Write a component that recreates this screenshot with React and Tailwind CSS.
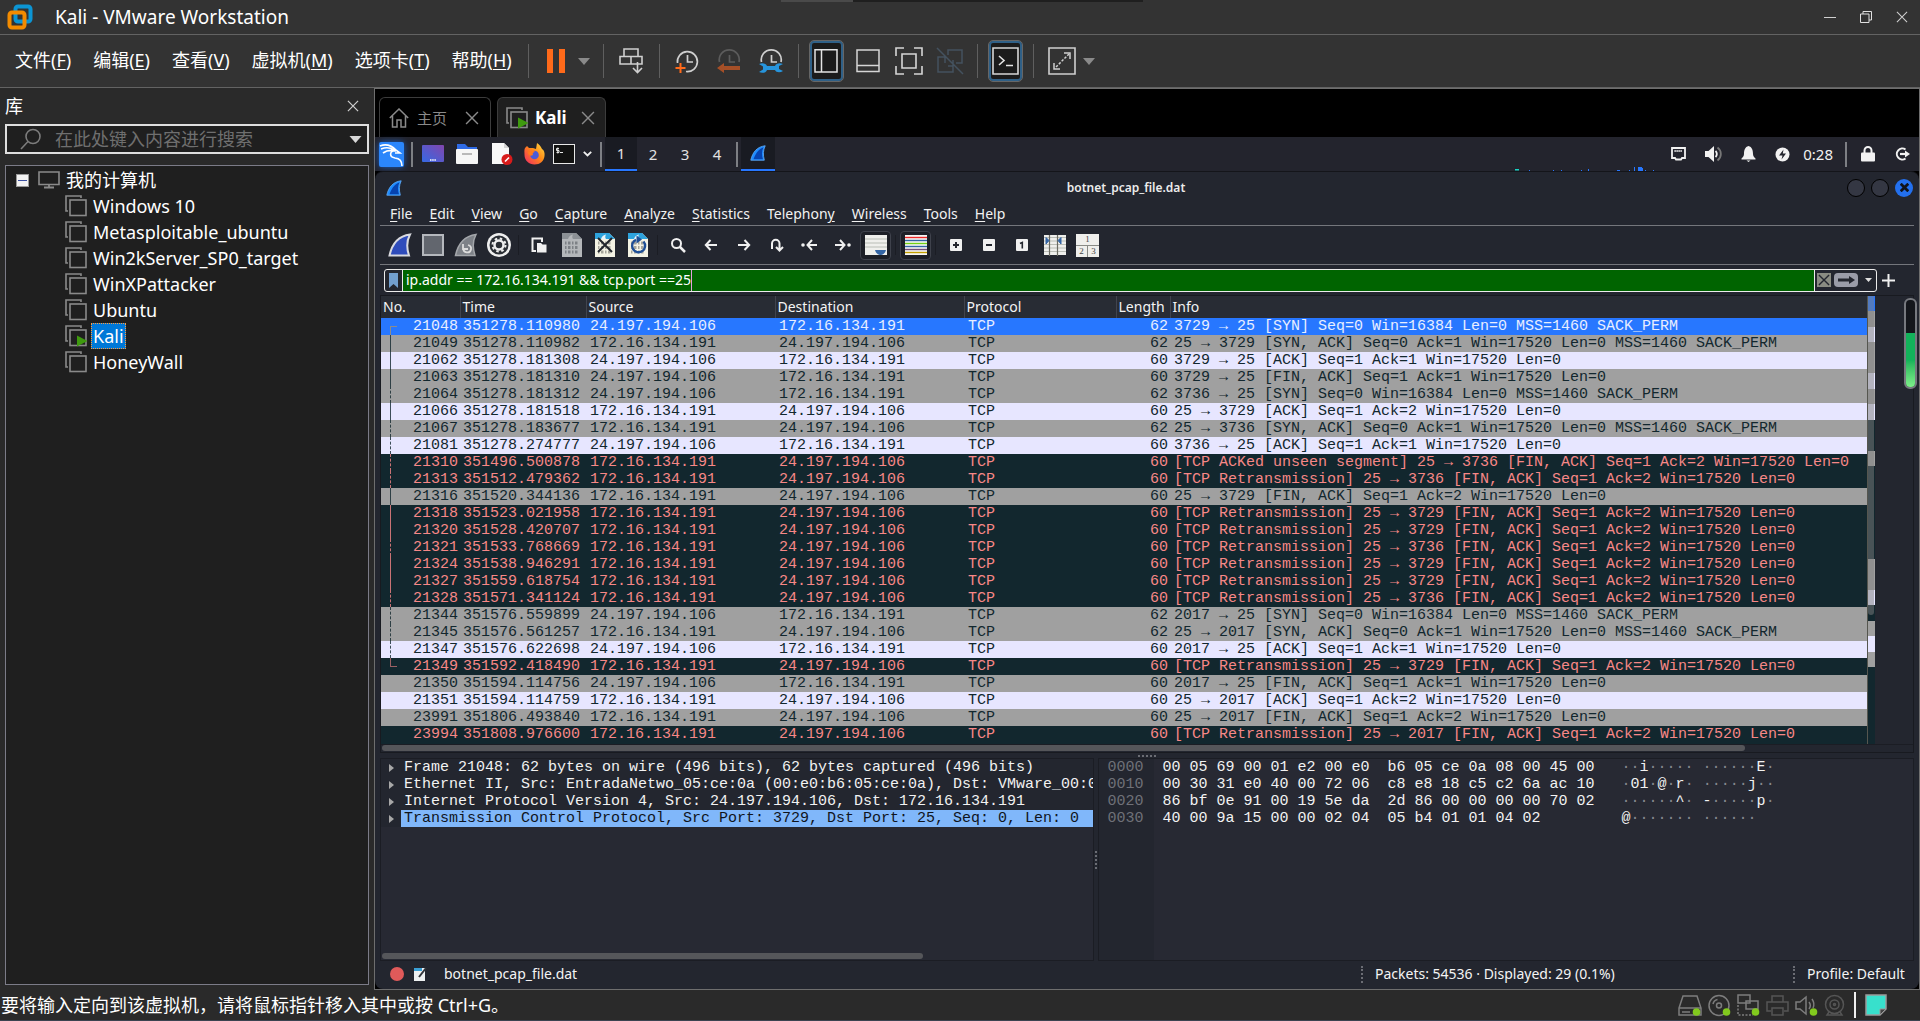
import React from "react";

const UI = "font-['Noto_Sans','Noto_Sans_CJK_SC',sans-serif]";
const MONO = "font-['Liberation_Mono',monospace]";

const MENUS = [
  ["文件", "F"],
  ["编辑", "E"],
  ["查看", "V"],
  ["虚拟机", "M"],
  ["选项卡", "T"],
  ["帮助", "H"],
];

const MACHINES = [
  "Windows 10",
  "Metasploitable_ubuntu",
  "Win2kServer_SP0_target",
  "WinXPattacker",
  "Ubuntu",
  "Kali",
  "HoneyWall",
];

const A = "24.197.194.106";
const B = "172.16.134.191";
const fin = (p, tag = true) =>
  `${tag ? "[TCP Retransmission] " : ""}25 → ${p} [FIN, ACK] Seq=1 Ack=2 Win=17520 Len=0`;

/* kind: s selected, g gray, l light, d dark; line: related-packet marker */
const PACKETS = [
  [21048, "351278.110980", A, B, 62, "3729 → 25 [SYN] Seq=0 Win=16384 Len=0 MSS=1460 SACK_PERM", "s", "start"],
  [21049, "351278.110982", B, A, 62, "25 → 3729 [SYN, ACK] Seq=0 Ack=1 Win=17520 Len=0 MSS=1460 SACK_PERM", "g", "solid"],
  [21062, "351278.181308", A, B, 60, "3729 → 25 [ACK] Seq=1 Ack=1 Win=17520 Len=0", "l", "solid"],
  [21063, "351278.181310", A, B, 60, "3729 → 25 [FIN, ACK] Seq=1 Ack=1 Win=17520 Len=0", "g", "solid"],
  [21064, "351278.181312", A, B, 62, "3736 → 25 [SYN] Seq=0 Win=16384 Len=0 MSS=1460 SACK_PERM", "g", "dash"],
  [21066, "351278.181518", B, A, 60, "25 → 3729 [ACK] Seq=1 Ack=2 Win=17520 Len=0", "l", "solid"],
  [21067, "351278.183677", B, A, 62, "25 → 3736 [SYN, ACK] Seq=0 Ack=1 Win=17520 Len=0 MSS=1460 SACK_PERM", "g", "dash"],
  [21081, "351278.274777", A, B, 60, "3736 → 25 [ACK] Seq=1 Ack=1 Win=17520 Len=0", "l", "dash"],
  [21310, "351496.500878", B, A, 60, "[TCP ACKed unseen segment] 25 → 3736 [FIN, ACK] Seq=1 Ack=2 Win=17520 Len=0", "d", "dash"],
  [21313, "351512.479362", B, A, 60, fin(3736), "d", "dash"],
  [21316, "351520.344136", B, A, 60, fin(3729, false), "g", "solid"],
  [21318, "351523.021958", B, A, 60, fin(3729), "d", "solid"],
  [21320, "351528.420707", B, A, 60, fin(3729), "d", "solid"],
  [21321, "351533.768669", B, A, 60, fin(3736), "d", "dash"],
  [21324, "351538.946291", B, A, 60, fin(3729), "d", "solid"],
  [21327, "351559.618754", B, A, 60, fin(3729), "d", "solid"],
  [21328, "351571.341124", B, A, 60, fin(3736), "d", "dash"],
  [21344, "351576.559899", A, B, 62, "2017 → 25 [SYN] Seq=0 Win=16384 Len=0 MSS=1460 SACK_PERM", "g", "dash"],
  [21345, "351576.561257", B, A, 62, "25 → 2017 [SYN, ACK] Seq=0 Ack=1 Win=17520 Len=0 MSS=1460 SACK_PERM", "g", "dash"],
  [21347, "351576.622698", A, B, 60, "2017 → 25 [ACK] Seq=1 Ack=1 Win=17520 Len=0", "l", "dash"],
  [21349, "351592.418490", B, A, 60, fin(3729), "d", "end"],
  [21350, "351594.114756", A, B, 60, "2017 → 25 [FIN, ACK] Seq=1 Ack=1 Win=17520 Len=0", "g", ""],
  [21351, "351594.114759", B, A, 60, "25 → 2017 [ACK] Seq=1 Ack=2 Win=17520 Len=0", "l", ""],
  [23991, "351806.493840", B, A, 60, "25 → 2017 [FIN, ACK] Seq=1 Ack=2 Win=17520 Len=0", "g", ""],
  [23994, "351808.976600", B, A, 60, fin(2017), "d", ""],
  [23996, "351812.251604", B, A, 60, fin(2017), "d", ""],
];

const ROW = {
  s: "bg-[#2777ff] text-[#e8eeff]",
  g: "bg-[#a0a0a0] text-[#12272e]",
  l: "bg-[#e7e6ff] text-[#12272e]",
  d: "bg-[#12272e] text-[#f78787]",
};

const MAP = { s: "bg-[#2777ff]", g: "bg-[#a0a0a0]", l: "bg-[#e7e6ff]", d: "bg-[#12272e]" };

const LINE = {
  start: "h-[9px] w-[7px] self-end border-l border-t border-[#8c8c8c]",
  end: "h-[9px] w-[7px] self-start border-l border-b border-current opacity-60",
  solid: "h-full w-[7px] border-l border-current opacity-80",
  dash: "h-full w-[7px] border-l border-dashed border-current opacity-80",
  "": "w-[7px]",
};

const DETAILS = [
  "Frame 21048: 62 bytes on wire (496 bits), 62 bytes captured (496 bits)",
  "Ethernet II, Src: EntradaNetwo_05:ce:0a (00:e0:b6:05:ce:0a), Dst: VMware_00:0",
  "Internet Protocol Version 4, Src: 24.197.194.106, Dst: 172.16.134.191",
  "Transmission Control Protocol, Src Port: 3729, Dst Port: 25, Seq: 0, Len: 0",
];

const HEX = [
  ["0000", "00 05 69 00 01 e2 00 e0  b6 05 ce 0a 08 00 45 00", "··i····· ······E·"],
  ["0010", "00 30 31 e0 40 00 72 06  c8 e8 18 c5 c2 6a ac 10", "·01·@·r· ·····j··"],
  ["0020", "86 bf 0e 91 00 19 5e da  2d 86 00 00 00 00 70 02", "······^· -·····p·"],
  ["0030", "40 00 9a 15 00 00 02 04  05 b4 01 01 04 02", "@······· ······"],
];

const WS_MENUS = [
  ["", "F", "ile"],
  ["", "E", "dit"],
  ["", "V", "iew"],
  ["", "G", "o"],
  ["", "C", "apture"],
  ["", "A", "nalyze"],
  ["", "S", "tatistics"],
  ["Telephon", "y", ""],
  ["", "W", "ireless"],
  ["", "T", "ools"],
  ["", "H", "elp"],
];

function Svg({ w = 24, h = w, vb, children, className = "" }) {
  return (
    <svg
      width={w}
      height={h}
      viewBox={vb || `0 0 ${w} ${h}`}
      fill="none"
      className={`shrink-0 ${className}`}
      aria-hidden="true"
    >
      {children}
    </svg>
  );
}

function VmLogo() {
  return (
    <Svg w={26} vb="0 0 26 26">
      <rect x="8.5" y="2.5" width="15" height="15" rx="2.5" stroke="#0c95d4" strokeWidth="4" />
      <rect x="2.5" y="8.5" width="15" height="15" rx="2.5" stroke="#f38b00" strokeWidth="4" />
      <path d="M8.5 11V15.5Q8.5 17.500 10.500 17.500H15" stroke="#0c95d4" strokeWidth="2.500" />
    </Svg>
  );
}

function Caret({ color = "#8a8a8a", w = 12 }) {
  return (
    <Svg w={w} h={7} vb="0 0 12 7">
      <path d="M0 0H12L6 7Z" fill={color} />
    </Svg>
  );
}

function Cross({ size = 13, color = "#d0d0d0", width = 1.3 }) {
  return (
    <Svg w={size} vb="0 0 13 13">
      <path d="M1 1L12 12M12 1L1 12" stroke={color} strokeWidth={width} />
    </Svg>
  );
}

function VmIcon({ running }) {
  return (
    <Svg w={23} h={22} vb="0 0 23 22">
      <path d="M16 3V1H1V16H3" stroke="#8a8a8a" strokeWidth="1.600" />
      <rect x="5" y="5" width="16" height="15.500" stroke="#8a8a8a" strokeWidth="1.600" fill="#1f1f1f" />
      {running && <path d="M12 10.500V21.500L22.500 16Z" fill="#3f9a0f" />}
    </Svg>
  );
}

function Fin({ w = 20, light = "#1d8cff", dark = "#0643b0", stroke = "#5aa4f0" }) {
  return (
    <Svg w={w} vb="0 0 20 20">
      <path d="M2 18C4 9 9 3 18 2C15.500 7 15.500 12 17 18Z" fill={light} stroke={stroke} strokeWidth="1" />
      <path d="M5 17C8 9 12 5 16 4C14 8 14 13 15.500 17Z" fill={dark} />
    </Svg>
  );
}

function ClockIcon({ kind }) {
  const c = kind === "back" ? "#5c5c5c" : "#cfcfcf";
  return (
    <Svg w={26} vb="0 0 26 26">
      {kind === "add" ? (
        <path d="M3.500 15A10 10 0 1 1 12 23.500" stroke={c} strokeWidth="1.700" />
      ) : (
        <path d="M3.500 14A10 10 0 1 1 23 14" stroke={c} strokeWidth="1.700" />
      )}
      <path d="M13.500 7V14H19" stroke={c} strokeWidth="1.700" />
      {kind === "add" && <path d="M6.500 15V25M1.500 20H11.500" stroke="#ff6a1a" strokeWidth="2" />}
      {kind === "back" && <path d="M1 20L8 15V18H24V22H8V25Z" fill="#a54f27" />}
      {kind === "wrench" && (
        <path
          d="M1 16C4 14.500 8 15 9 18H17C18 15 22 14.500 25 16L21 18V21L25 23C22 25 18 24.500 17 22H9C8 25 4 25.500 1 24L5 21.500V18.500Z"
          fill="#2795dd"
        />
      )}
    </Svg>
  );
}

function Divider() {
  return <span className="h-[34px] w-px shrink-0 bg-[#5f5f5f]" />;
}

function TopBar() {
  return (
    <header className="flex h-[35px] shrink-0 items-start border-b border-[#636363] bg-[#333333]">
      <div className="flex h-[34px] items-center gap-[22px] pl-[7px]">
        <VmLogo />
        <h1 className="whitespace-nowrap text-[19px] leading-6 text-white">Kali - VMware Workstation</h1>
      </div>
      <div className="flex h-[2px] flex-1 pl-[492px]">
        <span className="w-[72px] bg-[#4a4a4a]" />
        <span className="w-[290px] bg-[#1f1f1f]" />
      </div>
      <div className="flex h-[34px] items-center gap-6 pr-3">
        <button aria-label="最小化" className="flex w-3 justify-center">
          <Svg w={12} vb="0 0 12 12"><path d="M0 6.500H12" stroke="#d0d0d0" /></Svg>
        </button>
        <button aria-label="还原">
          <Svg w={12} vb="0 0 12 12">
            <path d="M3 3V.5H11.500V9H9M.5 3H9V11.500H.5Z" stroke="#e0e0e0" />
          </Svg>
        </button>
        <button aria-label="关闭"><Cross size={12} width={1.1} /></button>
      </div>
    </header>
  );
}

function VmToolbar() {
  return (
    <div className="flex h-[53px] shrink-0 items-center border-b border-[#636363] bg-[#333333] pl-[15px]">
      <nav className="flex gap-[22px] pb-[2px] text-[18px] leading-6 text-white">
        {MENUS.map(([t, k]) => (
          <button key={k} className="whitespace-nowrap">
            {t}(<u className="underline-offset-2">{k}</u>)
          </button>
        ))}
      </nav>
      <div className="ml-4 flex items-center">
        <Divider />
        <button aria-label="挂起" className="ml-[18px]">
          <Svg w={18} h={24} vb="0 0 18 24">
            <path d="M0 0H6V24H0ZM12 0H18V24H12Z" fill="#ff6a1a" />
          </Svg>
        </button>
        <button aria-label="电源选项" className="mx-[13px]"><Caret /></button>
        <Divider />
        <button aria-label="发送 Ctrl+Alt+Del" className="mx-[15px]">
          <Svg w={25} h={26} vb="0 0 25 26">
            <path d="M5 1H19V8.500H5ZM1 8.500H12V16H1ZM12 8.500H23V16H12Z" stroke="#cfcfcf" strokeWidth="1.600" />
            <path d="M18.500 14V24M14 20L18.500 24.500L23 20" stroke="#cfcfcf" strokeWidth="1.600" />
          </Svg>
        </button>
        <Divider />
        <div className="mx-[14px] flex gap-4">
          <button aria-label="拍摄快照"><ClockIcon kind="add" /></button>
          <button aria-label="恢复快照"><ClockIcon kind="back" /></button>
          <button aria-label="管理快照"><ClockIcon kind="wrench" /></button>
        </div>
        <Divider />
        <div className="ml-[11px] mr-[13px] flex items-center">
          <button aria-label="显示库" className="flex h-10 w-[33px] items-center justify-center rounded border-2 border-[#2f6087] bg-[#1b1b1b] outline outline-1 outline-[#666]">
            <Svg w={24} vb="0 0 24 24">
              <path d="M1 .8H23V23H1ZM7.500 1V23" stroke="#e4e4e4" strokeWidth="1.500" />
            </Svg>
          </button>
          <button aria-label="缩略图栏" className="ml-[13px]">
            <Svg w={24} vb="0 0 24 24">
              <path d="M1 1H23V22.500H1ZM1 16.500H23" stroke="#d6d6d6" strokeWidth="1.500" />
            </Svg>
          </button>
          <button aria-label="全屏" className="ml-[15px]">
            <Svg w={28} vb="0 0 28 28">
              <path d="M9 1H1V9M19 1H27V9M27 19V27H19M9 27H1V19M7 7H21V21H7Z" stroke="#d6d6d6" strokeWidth="1.600" />
            </Svg>
          </button>
          <button aria-label="Unity" className="ml-[13px]">
            <Svg w={28} vb="0 0 28 28">
              <path d="M12 8V3H26V16H20M9 10H2V25H17V19M9 10V16M17 13V19H12M1 1L27 27" stroke="#44525f" strokeWidth="1.500" />
            </Svg>
          </button>
        </div>
        <Divider />
        <button aria-label="控制台视图" className="mx-[11px] flex h-10 w-[33px] items-center justify-center rounded border-2 border-[#2f6087] bg-[#1b1b1b] outline outline-1 outline-[#666]">
          <Svg w={27} h={28} vb="0 0 27 28">
            <path d="M1 1H26V27H1Z" stroke="#d6d6d6" strokeWidth="1.600" />
            <path d="M7 9L12 13.500L7 18M14 18.500H21" stroke="#e4e4e4" strokeWidth="1.600" />
          </Svg>
        </button>
        <Divider />
        <button aria-label="拉伸" className="ml-[14px]">
          <Svg w={28} vb="0 0 28 28">
            <path d="M1 1H27V27H1Z" stroke="#cfcfcf" strokeWidth="1.600" />
            <path d="M16 6H22V12M6 16V22H12" stroke="#cfcfcf" strokeWidth="1.500" />
            <path d="M8 20L21 7" stroke="#cfcfcf" strokeWidth="1.500" strokeDasharray="2.500 1.500" />
          </Svg>
        </button>
        <button aria-label="拉伸选项" className="ml-[7px]"><Caret /></button>
      </div>
    </div>
  );
}

function Library() {
  return (
    <aside className="flex w-[374px] shrink-0 flex-col bg-[#2a2a2a] px-[5px] pb-[5px]">
      <div className="flex h-9 items-center justify-between pr-[10px]">
        <h2 className="text-[18px] leading-6 text-white">库</h2>
        <button aria-label="关闭库"><Cross size={12} /></button>
      </div>
      <label className="flex h-[30px] shrink-0 items-center border-2 border-[#dedede] bg-[#1f1f1f] pl-[13px] pr-1">
        <Svg w={22} vb="0 0 22 22">
          <circle cx="13" cy="8.500" r="7" stroke="#7c7c7c" strokeWidth="1.600" />
          <path d="M8 13.500L1 21" stroke="#7c7c7c" strokeWidth="1.600" />
        </Svg>
        <input
          aria-label="搜索"
          placeholder="在此处键入内容进行搜索"
          className="ml-[13px] min-w-0 flex-1 bg-transparent text-[18px] leading-6 outline-none placeholder:text-[#6f6f6f]"
        />
        <Caret color="#d8d8d8" w={15} />
      </label>
      <div className="mt-[11px] flex-1 border border-[#7c7c88] bg-[#1f1f1f] pt-px text-[18px] leading-[26px] text-white">
        <div className="flex items-center pl-[10px]">
          <button aria-label="折叠" className="mr-[9px] flex size-[13px] items-center justify-center border border-[#999] bg-[#f2f2f2]">
            <span className="h-px w-[9px] bg-[#3b4fa0]" />
          </button>
          <Svg w={22} h={18} vb="0 0 22 18">
            <path d="M1 1H21V13.500H1Z" stroke="#8a8a8a" strokeWidth="1.600" />
            <path d="M11 14V16M6 16.500H16" stroke="#8a8a8a" strokeWidth="1.800" />
          </Svg>
          <span className="ml-[6px]">我的计算机</span>
        </div>
        <ul>
          {MACHINES.map((m) => (
            <li key={m} className="flex items-center pl-[59px]">
              <VmIcon running={m === "Kali"} />
              <span
                className={
                  m === "Kali"
                    ? "ml-[3px] bg-[#0078d7] px-[2px] outline-1 -outline-offset-1 outline-dotted outline-[#ff9a3c]"
                    : "ml-[3px] px-[2px]"
                }
              >
                {m}
              </span>
            </li>
          ))}
        </ul>
      </div>
    </aside>
  );
}

function Tabs() {
  return (
    <div className="flex h-12 shrink-0 gap-[6px] bg-black pl-1 pt-2">
      <div className="flex w-[112px] items-center rounded-t-md border border-b-0 border-[#3c3c3c] pl-[9px]">
        <Svg w={20} vb="0 0 20 20">
          <path d="M.8 10L10 1L19.200 10M3.500 8V19H8V12H12V19H16.500V8" stroke="#8a8a8a" strokeWidth="1.500" />
        </Svg>
        <button className="ml-2 text-[15px] leading-6 text-[#8a8a8a]">主页</button>
        <button aria-label="关闭主页" className="ml-[18px]"><Cross size={14} color="#8a8a8a" /></button>
      </div>
      <div className="flex w-[109px] items-center rounded-t-md border border-b-0 border-[#3c3c3c] bg-[#1f1f1f] pl-2">
        <VmIcon running />
        <button className="ml-[6px] text-[17px] font-bold leading-6 text-white">Kali</button>
        <button aria-label="关闭 Kali" className="ml-[14px]"><Cross size={14} color="#8a8a8a" /></button>
      </div>
    </div>
  );
}

function PanelSep() {
  return <span className="h-[25px] w-[2px] shrink-0 bg-[#7d7f84]" />;
}

function KaliPanel() {
  return (
    <div className="flex h-[34px] shrink-0 items-center bg-[#23242d] pl-1">
      <button aria-label="Applications" className="mr-[7px] rounded-sm shadow-[0_0_6px_#1d5fc0]">
        <Svg w={25} vb="1 0 25 25">
          <rect x="1" width="25" height="25" rx="2" fill="#2b86fb" />
          <path d="M2 4C8 1.500 14 4 18 8M3 7C8 5 13 6 16 8M5 11C9 8 14 8 18 9M18 8C11 9 11 15 17 16C22 16.500 24 19 24 24M14 8L18 8L22 11L17 11" stroke="#fff" strokeWidth="1.600" />
        </Svg>
      </button>
      <PanelSep />
      <button aria-label="Show desktop" className="ml-[9px]">
        <Svg w={22} h={18} vb="0 0 22 18">
          <defs>
            <linearGradient id="desk" x1="0" y1="1" x2="1" y2="0">
              <stop offset="0" stopColor="#3569e4" />
              <stop offset="1" stopColor="#8246ad" />
            </linearGradient>
          </defs>
          <rect width="22" height="17" rx="1" fill="url(#desk)" />
          <path d="M8 15H14" stroke="#fff" strokeWidth="1.500" strokeDasharray="1.500 .7" />
        </Svg>
      </button>
      <button aria-label="Files" className="ml-3">
        <Svg w={22} h={20} vb="0 0 22 20">
          <path d="M1 0H9L12 3H21V8H1Z" fill="#2f6be6" />
          <rect y="5" width="22" height="15" rx="1" fill="#f6f6f6" />
          <path d="M6 10H16" stroke="#b9b9b9" strokeWidth="2" />
        </Svg>
      </button>
      <button aria-label="Text editor" className="ml-[14px]">
        <Svg w={21} h={22} vb="0 0 21 22">
          <path d="M0 0H12L17 5V21H0Z" fill="#f8f8f8" />
          <path d="M12 0V5H17" fill="#d5d5d5" />
          <circle cx="15" cy="16.500" r="5.500" fill="#d81b1b" />
          <path d="M13 18.500L17 14.500" stroke="#fff" strokeWidth="1.600" />
        </Svg>
      </button>
      <button aria-label="Firefox" className="ml-[11px]">
        <Svg w={21} h={22} vb="0 0 21 22">
          <defs>
            <linearGradient id="ffx" x1="1" y1="0" x2="0" y2="1">
              <stop offset="0" stopColor="#ffe24a" />
              <stop offset=".45" stopColor="#ff8a16" />
              <stop offset="1" stopColor="#f0246a" />
            </linearGradient>
          </defs>
          <path d="M1 5L3 3L5 5L9 5L12 6L13 0C16 2 17 4 18 6C20 7 21 10 20.500 13C20 18 16 21.500 10.500 21.500C5 21.500 .5 17.500 .5 12C.5 9 0 7 1 5Z" fill="url(#ffx)" />
          <circle cx="10.500" cy="12" r="4.300" fill="#4a5bd8" />
          <path d="M4 9C7 7 10 8 11 9C9 9 8 11 9 12C5 14 4 11 4 9Z" fill="#ff7a1c" />
        </Svg>
      </button>
      <button aria-label="Terminal" className="ml-2">
        <Svg w={22} h={20} vb="0 0 22 20">
          <rect x=".5" y=".5" width="21" height="19" fill="#121212" stroke="#e8e8e8" />
          <path d="M6 4.500H3.500V6.500H6V8.500H3.500M4.800 3.500V9.500M7 8.500H10" stroke="#e8e8e8" strokeWidth="1" />
        </Svg>
      </button>
      <button aria-label="More terminals" className="ml-2">
        <Svg w={9} h={6} vb="0 0 9 6"><path d="M.8 .8L4.500 4.500L8.200 .8" stroke="#f0f0f0" strokeWidth="1.800" /></Svg>
      </button>
      <span className="w-[8px]" />
      <PanelSep />
      <div className="ml-[3px] flex h-full text-[15px] leading-8 text-[#e2e2e2]">
        {["1", "2", "3", "4"].map((n) => (
          <button key={n} className={n === "1" ? "w-8 border-b-2 border-[#2777ff] bg-[#191b22]" : "w-8"}>
            {n}
          </button>
        ))}
      </div>
      <span className="w-[3px]" />
      <PanelSep />
      <button aria-label="Wireshark window" className="ml-[3px] flex h-full w-[34px] items-center justify-center border-b-2 border-[#2777ff] bg-[#191b22]">
        <Fin w={18} />
      </button>
      <div className="ml-auto flex h-full items-center pr-[9px] text-[#f2f2f2]">
        <svg width="144" height="6" viewBox="0 0 144 6" className="mr-3 self-end" aria-hidden="true">
          <path d="M0 4H4V5.500H0Z" fill="#19d3c5" />
          <path d="M14 5h1v1h-1zM38 5h1v1h-1zM46 5h1v1h-1zM66 5h1v1h-1zM73 4h1v2h-1zM102 5h3v1h-3zM114 5h1v1h-1zM119 2h1v4h-1zM123 2h4v1h1v3h-5zM130 5h1v1h-1zM138 5h1v1h-1z" fill="#2777ff" />
        </svg>
        <div className="flex items-center gap-[19px]">
          <Svg w={15} h={14} vb="0 0 15 14">
            <path d="M1 1H14V11H11L10 12.500H5L4 11H1Z" stroke="#f2f2f2" strokeWidth="1.800" />
            <path d="M3.500 4H11.500" stroke="#f2f2f2" strokeWidth="2" strokeDasharray="1.200 .8" />
          </Svg>
          <Svg w={17} h={16} vb="0 0 17 16">
            <path d="M0 5H3.500L9 0V16L3.500 11H0Z" fill="#f2f2f2" />
            <path d="M10.500 5A4 4 0 0 1 10.500 11" stroke="#f2f2f2" strokeWidth="1.800" />
            <path d="M12.500 1.500A8 8 0 0 1 12.500 14.500" stroke="#777" strokeWidth="1.800" />
          </Svg>
          <Svg w={15} h={16} vb="0 0 15 16">
            <path d="M7.500 0C11 1 12 4 12 8C12 10 13 11 14.500 12.500V13.500H.5V12.500C2 11 3 10 3 8C3 4 4 1 7.500 0ZM5.500 14.500H9.500L7.500 16Z" fill="#f2f2f2" />
          </Svg>
          <Svg w={15} vb="0 0 15 15">
            <circle cx="7.500" cy="7.500" r="7" fill="#f2f2f2" />
            <path d="M8.500 2.500L4 8.500H7.500L6.500 12.500L11 6.500H7.800Z" fill="#23242d" />
          </Svg>
        </div>
        <time className="ml-[13px] mr-3 text-[15px] leading-6">0:28</time>
        <PanelSep />
        <button aria-label="Lock" className="ml-[14px]">
          <Svg w={14} h={16} vb="0 0 14 16">
            <path d="M3.500 8V4.500A3.500 3.500 0 0 1 10.500 4.500V8" stroke="#f2f2f2" strokeWidth="2" />
            <rect y="6.500" width="14" height="9" rx="1" fill="#f2f2f2" />
          </Svg>
        </button>
        <button aria-label="Log out" className="ml-[20px]">
          <Svg w={15} h={14} vb="0 0 15 14">
            <path d="M10.500 2.500A5.500 5.500 0 1 0 10.500 11.500" stroke="#f2f2f2" strokeWidth="2" />
            <path d="M5 7H12" stroke="#f2f2f2" strokeWidth="2.200" />
            <path d="M10 3.500L15 7L10 10.500Z" fill="#f2f2f2" />
          </Svg>
        </button>
      </div>
    </div>
  );
}

function Sheet({ kind }) {
  const gray = kind === "save";
  return (
    <Svg w={20} h={24} vb="0 0 20 24">
      <path d="M0 0H14L20 6V24H0Z" fill={gray ? "#b4b7ba" : "#f4f3e4"} />
      <path d="M0 0H14L20 6H0Z" fill={gray ? "#8c9196" : "#2ea3dd"} />
      <path d="M6 6C7 3 9 2 11 1.500C10 3 10 5 11 6Z" fill={gray ? "#b4b7ba" : "#e8f4fa"} />
      <path d="M3 10H17M3 14.500H17M3 19H17" stroke={gray ? "#7d8186" : "#a5a59b"} strokeWidth="3" strokeDasharray="1.500 1.500 2.500 1.500" />
      {kind === "close" && <path d="M3 5L17 19M17 5L3 19" stroke="#22262c" strokeWidth="2" />}
      {kind === "reload" && (
        <>
          <path d="M15.500 8.500A6.500 6.500 0 1 1 8 6.800" stroke="#1f4f96" strokeWidth="2.400" />
          <path d="M8.500 2.500L14 6.500L8.500 10.500Z" fill="#1f4f96" />
        </>
      )}
    </Svg>
  );
}

const stroke = { stroke: "#f0f0f0", strokeWidth: 2 };
const TOOLS = [
  ["Start capture", <Svg w={24} vb="0 0 24 24" key="a"><path d="M1.500 22.500C4 11 10 3 22 1.500C18.500 8 18.500 15 21 22.500Z" fill="#2f4cbb" stroke="#d9dadf" strokeWidth="2" /></Svg>],
  ["Stop capture", <Svg w={22} vb="0 0 22 22" key="b"><rect x="1" y="1" width="20" height="20" fill="#62666e" stroke="#b5b8bd" strokeWidth="2" /></Svg>],
  ["Restart capture", <Svg w={24} vb="0 0 24 24" key="c"><path d="M1.500 22.500C4 11 10 3 22 1.500C18.500 8 18.500 15 21 22.500Z" fill="#7d8187" stroke="#a3a6aa" strokeWidth="1.500" /><path d="M9 11V16H14M9.500 15.500C9 20 16 21 17 16.500C17.500 14 16 12.500 14 12" stroke="#dcdcdc" strokeWidth="1.800" /></Svg>],
  ["Capture options", <Svg w={24} vb="0 0 24 24" key="d"><circle cx="12" cy="12" r="12" fill="#efefef" /><circle cx="12" cy="12" r="9.500" fill="#2b2f35" /><circle cx="12" cy="12" r="4.500" stroke="#efefef" strokeWidth="2.500" /><circle cx="12" cy="12" r="6.500" stroke="#efefef" strokeWidth="2" strokeDasharray="2.500 2.600" /></Svg>],
  null,
  ["Open", <Svg w={16} vb="0 0 16 16" key="e"><path d="M5 14H1.500V1.500H11V5" {...stroke} /><path d="M6 6H10L11.500 7.500H15.500V15.500H6Z" fill="#f0f0f0" /></Svg>],
  ["Save", <Sheet kind="save" key="f" />],
  ["Close file", <Sheet kind="close" key="g" />],
  ["Reload", <Sheet kind="reload" key="h" />],
  null,
  ["Find", <Svg w={16} vb="0 0 16 16" key="i"><circle cx="6.500" cy="6.500" r="4.500" {...stroke} /><path d="M9.500 9.500L15 15" stroke="#f0f0f0" strokeWidth="2.500" /></Svg>],
  ["Back", <Svg w={14} vb="0 0 14 14" key="j"><path d="M13 7H2M6.500 2L1.800 7L6.500 12" {...stroke} /></Svg>],
  ["Forward", <Svg w={14} vb="0 0 14 14" key="k"><path d="M1 7H12M7.500 2L12.200 7L7.500 12" {...stroke} /></Svg>],
  ["Go to packet", <Svg w={14} vb="0 0 14 14" key="l"><path d="M2 11V5.500A3.500 3.500 0 0 1 9.500 5.500V12M6 9L9.500 12.500L13 9" {...stroke} /></Svg>],
  ["First packet", <Svg w={17} h={14} vb="0 0 17 14" key="m"><path d="M16 7H7M11 2L6.500 7L11 12" {...stroke} /><circle cx="2" cy="7" r="1.800" fill="#f0f0f0" /></Svg>],
  ["Last packet", <Svg w={17} h={14} vb="0 0 17 14" key="n"><path d="M1 7H10M6 2L10.500 7L6 12" {...stroke} /><circle cx="15" cy="7" r="1.800" fill="#f0f0f0" /></Svg>],
  ["Auto scroll", <Svg w={22} h={20} vb="0 0 22 20" key="o"><rect width="22" height="20" fill="#efefec" /><path d="M0 4H22M0 8H22M0 12H22" stroke="#babdb6" strokeWidth="1.200" /><path d="M10 15H21C20 19 17 20 15.500 20C14 20 11 19 10 15Z" fill="#3465a4" /></Svg>, true],
  null,
  ["Colorize", <Svg w={22} h={20} vb="0 0 22 20" key="p"><rect width="22" height="20" fill="#f6f6f4" /><path d="M0 2.500H22" stroke="#ef2929" strokeWidth="1.400" /><path d="M0 5.500H22" stroke="#3465a4" strokeWidth="1.400" /><path d="M0 8.500H22" stroke="#73d216" strokeWidth="1.400" /><path d="M0 11.500H22" stroke="#3465a4" strokeWidth="1.400" /><path d="M0 14.500H22" stroke="#75507b" strokeWidth="1.400" /><path d="M0 17.500H22" stroke="#c4a000" strokeWidth="1.400" /></Svg>, true],
  null,
  ["Zoom in", <Svg w={12} vb="0 0 12 12" key="q"><rect width="12" height="12" rx="1" fill="#f0f0f0" /><path d="M6 3V9M3 6H9" stroke="#22252d" strokeWidth="2" /></Svg>],
  ["Zoom out", <Svg w={12} vb="0 0 12 12" key="r"><rect width="12" height="12" rx="1" fill="#f0f0f0" /><path d="M3 6H9" stroke="#22252d" strokeWidth="2" /></Svg>],
  ["Normal size", <Svg w={12} vb="0 0 12 12" key="s"><rect width="12" height="12" rx="1" fill="#f0f0f0" /><path d="M4 4.500L6.300 3.500V9.500" stroke="#22252d" strokeWidth="1.600" /></Svg>],
  ["Resize columns", <Svg w={22} h={21} vb="0 0 22 21" key="t"><rect width="22" height="20" fill="#efefec" /><path d="M0 2.500H22M0 6H22M0 9.500H22M0 13H22M0 16.500H22" stroke="#babdb6" strokeWidth="1" /><path d="M5.500 0V21M13.500 0V21" stroke="#6b6b62" strokeWidth="1.200" /><path d="M2 2.500L5 5.500L2 9ZM17 2.500L14 5.500L17 9Z" fill="#3465a4" stroke="#3465a4" /></Svg>],
  ["Layout", (
    <span key="u" className="grid grid-cols-2 gap-px bg-[#888a85] text-center font-['Liberation_Serif',serif] text-[9px] leading-[11px] text-[#444]">
      <span className="col-span-2 w-[23px] bg-[#efefec]">1</span>
      <span className="bg-[#efefec]">2</span>
      <span className="bg-[#efefec]">3</span>
    </span>
  )],
];

function WsToolbar() {
  return (
    <div className="flex h-[38px] shrink-0 items-center pl-[3px]">
      {TOOLS.map((t, i) =>
        t ? (
          <span key={i} className="flex w-[33px] justify-center">
            <button
              aria-label={t[0]}
              className={
                t[2]
                  ? "flex h-[29px] w-[31px] items-center justify-center rounded-sm border border-[#3f424c] bg-[#1d1f27]"
                  : "flex h-[29px] w-[31px] items-center justify-center"
              }
            >
              {t[1]}
            </button>
          </span>
        ) : (
          <span key={i} className="flex w-[7px] justify-center">
            <span className="h-5 w-px bg-[#1b1d24]" />
          </span>
        )
      )}
    </div>
  );
}

function Filter() {
  return (
    <div className="flex h-[30px] shrink-0 items-center pl-1 pr-[19px]">
      <div className="flex h-[23px] flex-1 items-stretch overflow-hidden rounded-[3px] border border-[#ececec]">
        <button aria-label="Bookmarks" className="flex w-[18px] items-center justify-center border-r border-[#ececec]">
          <Svg w={9} h={15} vb="0 0 9 15"><path d="M0 0H9V15L4.500 11L0 15Z" fill="#729fcf" /></Svg>
        </button>
        <label className="flex flex-1 bg-[#006400] pl-[3px]">
          <input
            aria-label="Display filter"
            defaultValue="ip.addr == 172.16.134.191 && tcp.port ==25"
            className="field-sizing-content border-r border-[#e6a0e0] bg-transparent text-[14px] leading-5 text-white outline-none"
          />
        </label>
        <div className="flex items-center border-l border-[#ececec] pl-[2px]">
          <button aria-label="Clear filter" className="flex h-[14px] w-[14px] items-center justify-center bg-[#8a8c82]">
            <Cross size={12} color="#23262f" width={1.5} />
          </button>
          <button aria-label="Apply filter" className="ml-[3px] flex h-[14px] w-6 items-center justify-center rounded-sm bg-[#9a9ca8]">
            <Svg w={17} h={8} vb="0 0 17 8"><path d="M0 2.500H11V0L17 4L11 8V5.500H0Z" fill="#23262f" /></Svg>
          </button>
          <button aria-label="Recent filters" className="ml-[7px] mr-1">
            <Svg w={7} h={4} vb="0 0 7 4"><path d="M0 0H7L3.500 4Z" fill="#e0e0e0" /></Svg>
          </button>
        </div>
      </div>
      <button aria-label="Add filter button" className="ml-[5px]">
        <Svg w={13} vb="0 0 13 13"><path d="M6.500 0V13M0 6.500H13" stroke="#f0f0f0" strokeWidth="2" /></Svg>
      </button>
    </div>
  );
}

function PacketList() {
  const head = "h-[22px] overflow-hidden border-r border-[#41444e] p-0 pl-[2px] text-left align-middle font-normal";
  return (
    <div className="flex h-[458px] shrink-0 flex-col border border-[#181a20] bg-[#23262f]">
      <div className="flex min-h-0 flex-1">
        <div className="min-w-0 flex-1 overflow-hidden border-r border-[#55564f] bg-[#12272e]">
          <table className="w-full table-fixed border-collapse">
            <colgroup>
              <col className="w-[79px]" />
              <col className="w-[126px]" />
              <col className="w-[189px]" />
              <col className="w-[189px]" />
              <col className="w-[152px]" />
              <col className="w-[54px]" />
              <col />
            </colgroup>
            <thead className="bg-[#282c34] text-[14px] leading-5 text-[#f4f4f4]">
              <tr>
                {["No.", "Time", "Source", "Destination", "Protocol", "Length"].map((h) => (
                  <th key={h} className={head}>{h}</th>
                ))}
                <th className="h-[22px] p-0 pl-[2px] text-left align-middle font-normal">Info</th>
              </tr>
            </thead>
            <tbody className={`${MONO} text-[15px] leading-[17px]`}>
              {PACKETS.map((p) => (
                <tr key={p[0]} className={`h-[17px] whitespace-pre ${ROW[p[6]]}`}>
                  <td className="p-0">
                    <div className="flex h-[17px] items-center justify-between pl-[9px] pr-[2px]">
                      <span className={LINE[p[7]]} />
                      {p[0]}
                    </div>
                  </td>
                  <td className="p-0 pl-[3px]">{p[1]}</td>
                  <td className="p-0 pl-1">{p[2]}</td>
                  <td className="p-0 pl-1">{p[3]}</td>
                  <td className="p-0 pl-1">TCP</td>
                  <td className="p-0 pr-[2px] text-right">{p[4]}</td>
                  <td className="overflow-hidden p-0 pl-1">{p[5]}</td>
                </tr>
              ))}
            </tbody>
          </table>
        </div>
        <div className="relative flex w-[7px] flex-col">
          {PACKETS.map((p) => (
            <span key={p[0]} className={`flex-1 ${MAP[p[6]]}`} />
          ))}
          <span className="h-[46px] bg-[#12272e]" />
          <span className="absolute left-0 top-0 h-[319px] w-[6px] rounded-b bg-[#808080]/50" />
        </div>
        <div className="w-[38px]" />
      </div>
      <div className="h-2 shrink-0 border-t border-[#1b1d24] pl-px">
        <div className="h-[6px] w-[89%] rounded-full bg-[#55565a]" />
      </div>
    </div>
  );
}

function Details() {
  return (
    <div className="flex min-w-0 flex-[712] flex-col border border-[#1b1d24] bg-[#272933]">
      <ul className={`${MONO} flex-1 overflow-hidden text-[15px] leading-[17px] text-[#f2f2f2]`}>
        {DETAILS.map((d, i) => (
          <li key={d} className="flex">
            <button aria-label="Expand" className="flex w-5 shrink-0 items-center bg-[#23262f] pl-2">
              <Svg w={5} h={8} vb="0 0 5 8"><path d="M0 0L5 4L0 8Z" fill="#a8a8a8" /></Svg>
            </button>
            <span className={`min-w-0 flex-1 overflow-hidden whitespace-pre pl-[3px] ${i === 3 ? "bg-[#80b7fa] text-[#10141c]" : "bg-[#23262f]"}`}>
              {d}
            </span>
          </li>
        ))}
      </ul>
      <div className="m-px h-[6px] w-[76%] shrink-0 rounded-full bg-[#55565a]" />
    </div>
  );
}

function HexPane() {
  return (
    <div className={`${MONO} flex min-w-0 flex-[815] border border-[#1b1d24] bg-[#272933] text-[15px] leading-[17px]`}>
      <div className="w-[55px] shrink-0 bg-[#23262f] pl-[9px] text-[#6f7178]">
        {HEX.map((h) => (
          <div key={h[0]}>{h[0]}</div>
        ))}
      </div>
      <div className="w-[459px] shrink-0 whitespace-pre pl-[9px] text-[#f2f2f2] box-content">
        {HEX.map((h) => (
          <div key={h[0]}>{h[1]}</div>
        ))}
      </div>
      <div className="whitespace-pre text-[#f2f2f2]">
        {HEX.map((h) => (
          <div key={h[0]}>
            {h[2].split(/(·+)/).map((s, i) => (
              <span key={i} className={s.startsWith("·") ? "text-[#85878e]" : ""}>{s}</span>
            ))}
          </div>
        ))}
      </div>
    </div>
  );
}

function WsStatus() {
  const sep = "h-[17px] w-0 border-l-2 border-dotted border-[#6b6d74]";
  return (
    <footer className="flex h-7 shrink-0 items-center pb-[2px] pl-[10px] pr-[6px] text-[14px] leading-5 text-[#f4f4f4]">
      <button aria-label="Expert information" className="mr-[10px] size-[14px] rounded-full bg-[#e05a5a]" />
      <button aria-label="Capture comment">
        <Svg w={13} h={14} vb="0 0 13 14">
          <rect y="1" width="11" height="13" fill="#eef1f2" />
          <path d="M0 1H8V4H0Z" fill="#3aa0d6" />
          <path d="M12 1L5 10" stroke="#30343a" strokeWidth="2" />
        </Svg>
      </button>
      <span className="ml-[17px] flex-1 whitespace-nowrap">botnet_pcap_file.dat</span>
      <span className={sep} />
      <span className="ml-[12px] w-[418px] whitespace-nowrap">Packets: 54536 · Displayed: 29 (0.1%)</span>
      <span className={sep} />
      <span className="ml-[12px] w-[101px] whitespace-nowrap">Profile: Default</span>
    </footer>
  );
}

function Wireshark() {
  return (
    <section className="relative flex min-h-0 flex-1 flex-col rounded-lg border-t border-[#14151a] bg-[#23262f] px-[5px]">
      <div className="grid h-[31px] shrink-0 grid-cols-[1fr_auto_1fr] items-center pl-[5px] pr-px">
        <Fin w={18} />
        <h2 className="pr-[46px] text-[12px] font-semibold leading-4 text-[#ececec]">botnet_pcap_file.dat</h2>
        <div className="flex justify-end gap-[6px]">
          <button aria-label="Minimize" className="size-[18px] rounded-full border border-black bg-[#343743]" />
          <button aria-label="Maximize" className="size-[18px] rounded-full border border-black bg-[#343743]" />
          <button aria-label="Close" className="flex size-[18px] items-center justify-center rounded-full bg-[#2370ee]">
            <Cross size={9} color="#10131a" width={4} />
          </button>
        </div>
      </div>
      <nav className="flex h-[23px] shrink-0 items-center gap-[17px] border-b border-[#74767c] pl-[10px] text-[14px] leading-5 text-[#f2f2f2]">
        {WS_MENUS.map(([a, k, b]) => (
          <button key={a + k + b}>
            {a}<u className="underline-offset-2">{k}</u>{b}
          </button>
        ))}
      </nav>
      <WsToolbar />
      <div className="h-px shrink-0 bg-[#74767c]" />
      <Filter />
      <PacketList />
      <div className="flex h-[5px] shrink-0 items-center justify-center">
        <span className="w-[18px] border-t-2 border-dotted border-[#6b6d74]" />
      </div>
      <div className="flex min-h-0 flex-1">
        <Details />
        <div className="flex w-1 shrink-0 items-center justify-center">
          <span className="h-[18px] border-l-2 border-dotted border-[#6b6d74]" />
        </div>
        <HexPane />
      </div>
      <WsStatus />
      <div className="absolute right-[2px] top-[126px] flex h-[91px] w-[13px] flex-col justify-end overflow-hidden rounded-md border-2 border-[#77797f] bg-[#14161b]">
        <div className="h-[62%] bg-gradient-to-b from-[#12b25a] from-50% to-[#7cf08a]" />
      </div>
    </section>
  );
}

function Dot() {
  return <circle cx="18.500" cy="18" r="3.800" fill="#82c91e" />;
}

function VmStatus() {
  const s = { stroke: "#7d7d7d", strokeWidth: 1.5 };
  const t = { stroke: "#555", strokeWidth: 1.5 };
  return (
    <footer className="flex h-[31px] shrink-0 items-center border-b border-[#3b4350] bg-[#2a2a2a] pr-[33px]">
      <p className="pl-px text-[18px] leading-6 text-white">要将输入定向到该虚拟机，请将鼠标指针移入其中或按 Ctrl+G。</p>
      <div className="ml-auto flex items-center gap-[6px]">
        <Svg w={24} h={23} vb="0 0 24 23"><path d="M1 14L5 2H19L23 14V21H1ZM1 14H23M4 18H12" {...s} /><Dot /></Svg>
        <Svg w={23} vb="0 0 23 23"><circle cx="11" cy="11.500" r="10" {...s} /><circle cx="11" cy="11.500" r="2.500" {...s} /><path d="M5 10C5.500 7.500 7 6 9.500 5.500" {...s} /><Dot /></Svg>
        <Svg w={23} vb="0 0 23 23"><path d="M1 1H13V9H1ZM9 7H21V15H9Z" fill="#2a2a2a" {...s} /><path d="M1 11V21H16" {...s} strokeDasharray="2 1.500" /><Dot /></Svg>
        <Svg w={23} vb="0 0 23 23"><path d="M6 8V2H17V8M5 17H1V8H22V17H18M6 14H17V21H6Z" {...t} /></Svg>
        <Svg w={23} vb="0 0 23 23"><path d="M1 8H5L11 3V20L5 15H1ZM14 8C15.500 10 15.500 13 14 15M17 5C19 8 19 12 18 14" {...s} /><Dot /></Svg>
        <Svg w={21} h={23} vb="0 0 21 23"><circle cx="10.500" cy="10.500" r="9" {...t} /><circle cx="10.500" cy="10.500" r="4.500" {...t} /><circle cx="10.500" cy="10.500" r="1" {...t} /><path d="M5 18L3 21H18L16 18" {...t} /></Svg>
      </div>
      <span className="ml-[9px] mr-[9px] h-[26px] w-[2px] bg-[#f0f0f0]" />
      <Svg w={22} vb="0 0 22 22"><path d="M1 1H21V15L15 21H1Z" fill="#38e0cc" stroke="#9a9a9a" strokeWidth="1.500" /><path d="M15 21V15H21Z" fill="#444" stroke="#9a9a9a" /></Svg>
    </footer>
  );
}

export default function App() {
  return (
    <div className={`${UI} flex h-screen flex-col overflow-hidden bg-[#2a2a2a]`}>
      <TopBar />
      <VmToolbar />
      <div className="flex min-h-0 flex-1">
        <Library />
        <main className="flex min-w-0 flex-1 flex-col border border-[#6e6e6e] bg-black">
          <Tabs />
          <KaliPanel />
          <Wireshark />
        </main>
      </div>
      <VmStatus />
    </div>
  );
}
